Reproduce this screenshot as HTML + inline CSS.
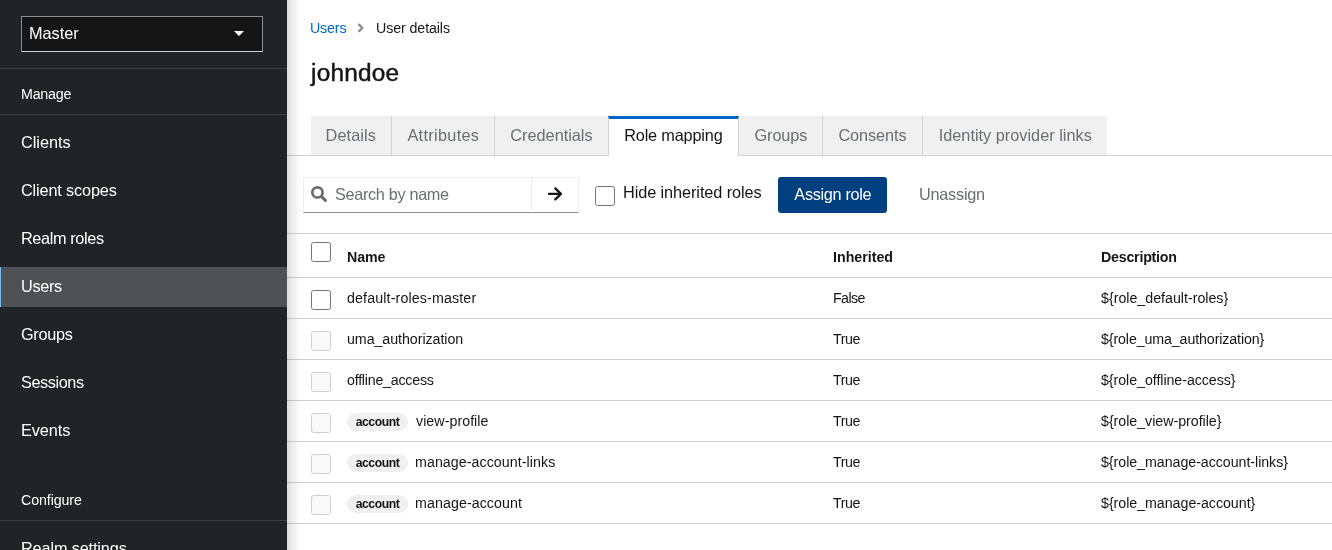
<!DOCTYPE html>
<html lang="en">
<head>
<meta charset="utf-8">
<title>Keycloak Administration Console</title>
<style>
*{box-sizing:border-box;margin:0;padding:0}
html,body{width:1332px;height:550px;overflow:hidden;background:#fff}
body{font-family:"Liberation Sans",sans-serif;color:#151515;font-size:16px;position:relative}
.abs{position:absolute;white-space:nowrap}
/* sidebar */
#side{position:absolute;left:0;top:0;width:287px;height:550px;background:#212427;z-index:5}
#shadow{position:absolute;left:0;top:-60px;width:287px;height:670px;z-index:4;box-shadow:12px 0 12px -8px rgba(3,3,3,.18)}
#realm{position:absolute;left:21px;top:16px;width:242px;height:36px;background:#151515;border:1px solid #8a8d90;border-bottom-color:#d0d0d0}
#realm span{position:absolute;left:7px;top:8px;font-size:16px;color:#fff;line-height:18px}
#realm i{position:absolute;left:212px;top:14px;width:0;height:0;border-left:5px solid transparent;border-right:5px solid transparent;border-top:5.6px solid #fff}
.hr{position:absolute;left:0;width:287px;height:1px;background:#3c3f42}
.sec{position:absolute;left:21px;font-size:14px;color:#fff;line-height:16px}
.nav{position:absolute;left:0;width:287px;height:40px;color:#fff;font-size:16px;line-height:40px;padding-left:21px}
.nav.cur{background:#4f5255}
.nav.cur:before{content:"";position:absolute;left:0;top:0;width:1px;height:40px;background:#73bcf7}
/* main */
#main{position:absolute;left:287px;top:0;width:1045px;height:550px;background:#fff}
a{color:#06c;text-decoration:none}
.tab{position:absolute;top:116px;height:39px;background:#f0f0f0;color:#6a6e73;font-size:16px;line-height:39px;text-align:center;border-right:1px solid #d2d2d2;white-space:nowrap}
.tab.cur{background:#fff;color:#151515;border-top:3px solid #06c;line-height:34px;height:40px}
.row{position:absolute;left:287px;width:1045px;height:1px;background:#d2d2d2}
.cell{position:absolute;font-size:14px;line-height:16px;white-space:nowrap;color:#151515}
.th{font-weight:bold}
.cb{position:absolute;left:311px;width:20px;height:20px;border:1px solid #767676;border-radius:2.5px;background:#fff}
.cb.dis{border-color:#d0d0d0;background:#f9f9f9;width:20px;height:20px}
.chip{position:absolute;left:347px;height:18px;width:61px;border-radius:9px;background:#f0f0f0;font-size:12px;font-weight:bold;line-height:18px;text-align:center;color:#151515}
[id^="t"]{will-change:transform;transform:scale(1.017);transform-origin:0 75%}
.tx{display:inline-block;transform-origin:50% 75%}
.nav .tx{transform-origin:0 75%;translate:0 .3px}
#t39{translate:0 .4px}
#t1,#t2{translate:0 -.3px}
.cell{translate:0 -.2px}
.cell.th{translate:0 0}
/*FIT*/
#t1{letter-spacing:-0.16px;margin-left:-1.0px}
#t2{letter-spacing:-0.10px;}
#t3{letter-spacing:0.20px;}
#t4{letter-spacing:0.09px;}
#t5{letter-spacing:0.31px;}
#t6{letter-spacing:0.00px;}
#t7{letter-spacing:-0.17px;}
#t8{letter-spacing:-0.12px;}
#t9{letter-spacing:-0.09px;}
#t10{letter-spacing:0.01px;}
#t11{letter-spacing:-0.33px;}
#t12{letter-spacing:-0.08px;}
#t13{letter-spacing:-0.32px;}
#t14{letter-spacing:-0.24px;}
#t15{letter-spacing:-0.12px;}
#t16{letter-spacing:-0.01px;}
#t17{letter-spacing:-0.23px;}
#t18{letter-spacing:0.13px;}
#t19{letter-spacing:-0.60px;}
#t20{letter-spacing:-0.01px;}
#t21{letter-spacing:-0.06px;}
#t22{letter-spacing:-0.40px;}
#t23{letter-spacing:-0.12px;}
#t24{letter-spacing:-0.23px;}
#t25{letter-spacing:-0.40px;}
#t26{letter-spacing:-0.06px;}
#t27{letter-spacing:-0.43px;}
#t28{letter-spacing:0.04px;}
#t29{letter-spacing:-0.40px;}
#t30{letter-spacing:-0.03px;}
#t31{letter-spacing:-0.43px;}
#t32{letter-spacing:0.05px;margin-left:-1px;}
#t33{letter-spacing:-0.40px;}
#t34{letter-spacing:-0.05px;}
#t35{letter-spacing:-0.43px;}
#t36{letter-spacing:0.07px;margin-left:-1px;}
#t37{letter-spacing:-0.40px;}
#t38{letter-spacing:-0.04px;}
#t39{letter-spacing:0.00px;}
#t40{letter-spacing:-0.20px;}
#t41{letter-spacing:-0.03px;}
#t42{letter-spacing:-0.15px;}
#t43{letter-spacing:-0.37px;}
#t44{letter-spacing:-0.34px;}
#t45{letter-spacing:-0.29px;}
#t46{letter-spacing:-0.42px;}
#t47{letter-spacing:-0.08px;}
#t48{letter-spacing:-0.10px;}
#t49{letter-spacing:-0.14px;}
/*ENDFIT*/
</style>
</head>
<body>
<div id="main"></div>

<!-- breadcrumb -->
<a id="t1" class="abs" style="left:311px;top:19px;font-size:14px;line-height:18px">Users</a>
<svg class="abs" style="left:356px;top:23px" width="9" height="12" viewBox="0 0 9 12"><path d="M3.1 1.6 L6.4 4.85 L3.1 8.1" fill="none" stroke="#8a8d90" stroke-width="2.2" stroke-linecap="round" stroke-linejoin="round"/></svg>
<span id="t2" class="abs" style="left:376px;top:19px;font-size:14px;line-height:18px">User details</span>
<h1 id="t3" class="abs" style="left:311px;top:58px;font-size:24px;line-height:30px;font-weight:normal;-webkit-text-stroke:0.45px #151515">johndoe</h1>

<!-- tabs -->
<div class="row" style="top:155px;left:287px"></div>
<div class="tab" style="left:311px;width:81px"><span id="t4" class="tx">Details</span></div>
<div class="tab" style="left:392px;width:103px"><span id="t5" class="tx">Attributes</span></div>
<div class="tab" style="left:495px;width:114px"><span id="t6" class="tx">Credentials</span></div>
<div class="tab cur" style="left:608px;width:131px;border-left:1px solid #d2d2d2"><span id="t7" class="tx">Role mapping</span></div>
<div class="tab" style="left:739px;width:84px"><span id="t8" class="tx">Groups</span></div>
<div class="tab" style="left:823px;width:100px"><span id="t9" class="tx">Consents</span></div>
<div class="tab" style="left:923px;width:184px;border-right:0"><span id="t10" class="tx">Identity provider links</span></div>

<!-- toolbar -->
<div class="abs" style="left:303px;top:177px;width:229px;height:36px;border:1px solid #f0f0f0;border-bottom:1px solid #8a8d90"></div>
<div class="abs" style="left:531px;top:177px;width:48px;height:36px;border:1px solid #f0f0f0;border-bottom:1px solid #8a8d90"></div>
<svg class="abs" style="left:310px;top:185px" width="18" height="18" viewBox="0 0 18 18"><circle cx="7.45" cy="7.4" r="5.1" fill="none" stroke="#6a6e73" stroke-width="2.7"/><path d="M11.7 11.6 L15.4 15.3" stroke="#6a6e73" stroke-width="3.1" stroke-linecap="round"/></svg>
<span id="t11" class="abs" style="left:335px;top:185px;font-size:16px;line-height:20px;color:#6a6e73">Search by name</span>
<svg class="abs" style="left:547px;top:186px" width="16" height="16" viewBox="0 0 16 16"><path d="M2 7.9 H13.6 M8.3 2.4 L13.9 7.9 L8.3 13.4" fill="none" stroke="#151515" stroke-width="2.3" stroke-linecap="round" stroke-linejoin="round"/></svg>
<div class="cb" style="left:595px;top:186px;width:20px;height:20px"></div>
<span id="t12" class="abs" style="left:623px;top:183px;font-size:16px;line-height:20px">Hide inherited roles</span>
<div class="abs" style="left:778px;top:177px;width:109px;height:36px;border-radius:3px;background:#004080;color:#fff;font-size:16px;line-height:36px;text-align:center"><span id="t13" class="tx">Assign role</span></div>
<span id="t14" class="abs" style="left:919px;top:185px;font-size:16px;line-height:20px;color:#6a6e73">Unassign</span>

<!-- table -->
<div class="row" style="top:233px"></div>
<div class="cb" style="top:242px"></div>
<span id="t15" class="cell th" style="left:347px;top:249px">Name</span>
<span id="t16" class="cell th" style="left:833px;top:249px">Inherited</span>
<span id="t17" class="cell th" style="left:1101px;top:249px">Description</span>
<div class="row" style="top:277px"></div>

<div class="cb" style="top:290px"></div>
<span id="t18" class="cell" style="left:347px;top:290px">default-roles-master</span>
<span id="t19" class="cell" style="left:833px;top:290px">False</span>
<span id="t20" class="cell" style="left:1101px;top:290px">${role_default-roles}</span>
<div class="row" style="top:318px"></div>

<div class="cb dis" style="top:331px"></div>
<span id="t21" class="cell" style="left:347px;top:331px">uma_authorization</span>
<span id="t22" class="cell" style="left:833px;top:331px">True</span>
<span id="t23" class="cell" style="left:1101px;top:331px">${role_uma_authorization}</span>
<div class="row" style="top:359px"></div>

<div class="cb dis" style="top:372px"></div>
<span id="t24" class="cell" style="left:347px;top:372px">offline_access</span>
<span id="t25" class="cell" style="left:833px;top:372px">True</span>
<span id="t26" class="cell" style="left:1101px;top:372px">${role_offline-access}</span>
<div class="row" style="top:400px"></div>

<div class="cb dis" style="top:413px"></div>
<div class="chip" style="top:413px"><span id="t27" class="tx">account</span></div>
<span id="t28" class="cell" style="left:416px;top:413px">view-profile</span>
<span id="t29" class="cell" style="left:833px;top:413px">True</span>
<span id="t30" class="cell" style="left:1101px;top:413px">${role_view-profile}</span>
<div class="row" style="top:441px"></div>

<div class="cb dis" style="top:454px"></div>
<div class="chip" style="top:454px"><span id="t31" class="tx">account</span></div>
<span id="t32" class="cell" style="left:416px;top:454px">manage-account-links</span>
<span id="t33" class="cell" style="left:833px;top:454px">True</span>
<span id="t34" class="cell" style="left:1101px;top:454px">${role_manage-account-links}</span>
<div class="row" style="top:482px"></div>

<div class="cb dis" style="top:495px"></div>
<div class="chip" style="top:495px"><span id="t35" class="tx">account</span></div>
<span id="t36" class="cell" style="left:416px;top:495px">manage-account</span>
<span id="t37" class="cell" style="left:833px;top:495px">True</span>
<span id="t38" class="cell" style="left:1101px;top:495px">${role_manage-account}</span>
<div class="row" style="top:523px"></div>

<!-- sidebar -->
<div id="shadow"></div>
<div id="side">
  <div id="realm"><span id="t39">Master</span><i></i></div>
  <div class="hr" style="top:68px"></div>
  <div id="t40" class="sec" style="top:86px">Manage</div>
  <div class="hr" style="top:114px"></div>
  <div class="nav" style="top:123px"><span id="t41" class="tx">Clients</span></div>
  <div class="nav" style="top:171px"><span id="t42" class="tx">Client scopes</span></div>
  <div class="nav" style="top:219px"><span id="t43" class="tx">Realm roles</span></div>
  <div class="nav cur" style="top:267px"><span id="t44" class="tx">Users</span></div>
  <div class="nav" style="top:315px"><span id="t45" class="tx">Groups</span></div>
  <div class="nav" style="top:363px"><span id="t46" class="tx">Sessions</span></div>
  <div class="nav" style="top:411px"><span id="t47" class="tx">Events</span></div>
  <div id="t48" class="sec" style="top:492px">Configure</div>
  <div class="hr" style="top:520px"></div>
  <div class="nav" style="top:529px"><span id="t49" class="tx">Realm settings</span></div>
</div>
</body>
</html>
